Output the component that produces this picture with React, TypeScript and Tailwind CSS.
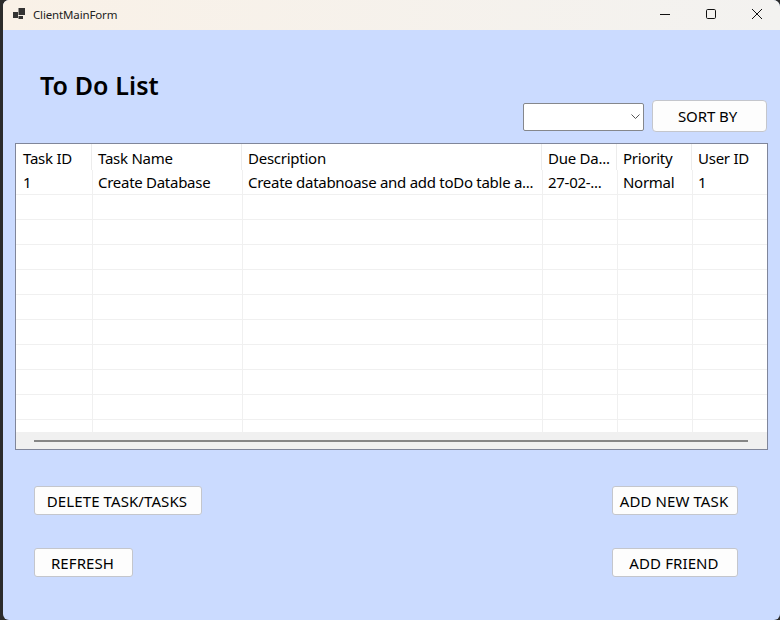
import React from "react";

const Btn = ({ label, w }: { label: string; w: string }) => (
  <button className={`${w} h-[29px] flex items-center justify-center pt-[1px] pr-[2px] rounded-[3px] bg-[#fdfdfd] border border-[#c4c6cc] text-[15px] text-black tracking-[0.1px]`}>
    {label}
  </button>
);

const headers: [string, string][] = [
  ["Task ID", "w-[76px]"],
  ["Task Name", "w-[150px]"],
  ["Description", "w-[300px]"],
  ["Due Da...", "w-[75px]"],
  ["Priority", "w-[75px]"],
  ["User ID", "flex-1"],
];
const widths = ["w-[77px]", "w-[150px]", "w-[300px]", "w-[75px]", "w-[75px]", "flex-1"];
const first = ["1", "Create Database", "Create databnoase and add toDo table a...", "27-02-...", "Normal", "1"];

const Row = ({ cells }: { cells: string[] }) => (
  <div className="flex h-[25px] shrink-0 border-b border-[#f0f0f0]">
    {widths.map((w, i) => (
      <div
        key={i}
        className={`${w} ${i < 5 ? "border-r border-[#f0f0f0]" : ""} ${i === 0 ? "pl-[7px]" : "pl-[5px]"} h-full flex items-center whitespace-nowrap overflow-hidden text-[15px] text-black tracking-[-0.28px]`}
      >
        {cells[i]}
      </div>
    ))}
  </div>
);

export default function App() {
  return (
    <div className="w-[780px] h-[620px] bg-[#2b2b2b] pl-[3px] overflow-hidden" style={{ fontFamily: '"Noto Sans", "Open Sans", sans-serif' }}>
      <div className="w-[777px] h-[620px] rounded-tl-[6px] rounded-tr-[7px] rounded-b-[6px] overflow-hidden bg-[#cbdbff] flex flex-col">
        {/* title bar */}
        <div className="h-[30px] shrink-0 flex items-center bg-gradient-to-r from-[#f9f1e7] to-[#f3f2f0]">
          <svg width="12" height="12" viewBox="0 0 12 12" className="ml-[10px] -mt-[2px]">
            <rect x="0" y="4" width="5" height="6" fill="#333" />
            <rect x="5.5" y="0" width="6.5" height="7" fill="#333" />
            <rect x="5.5" y="8" width="4.5" height="3" fill="#333" />
          </svg>
          <span className="ml-[8px] text-[11.5px] text-[#222] tracking-[-0.15px]">ClientMainForm</span>
          <div className="ml-auto -mt-[2px] flex items-center">
            <svg width="12" height="12" viewBox="0 0 12 12" className="mr-[34px]">
              <path d="M1 6.5H11" stroke="#111" strokeWidth="1" />
            </svg>
            <svg width="12" height="12" viewBox="0 0 12 12" className="mr-[34px]">
              <rect x="1.5" y="1.5" width="9" height="9" rx="1.2" fill="none" stroke="#111" strokeWidth="1" />
            </svg>
            <svg width="12" height="12" viewBox="0 0 12 12" className="mr-[17px]">
              <path d="M1 1L11 11M11 1L1 11" stroke="#111" strokeWidth="1" />
            </svg>
          </div>
        </div>

        <div className="flex-1 pl-[12px] pr-[12px] flex flex-col">
          {/* heading row */}
          <div className="h-[113px] shrink-0 flex justify-between">
            <h1 className="ml-[25px] mt-[38px] h-[36px] flex items-center text-[25px] font-semibold text-black tracking-[0.1px]">To Do List</h1>
            <div className="self-end mb-[11px] mr-[1px] flex items-center gap-[8px]">
              <div className="w-[121px] h-[28px] mt-[2px] bg-white border border-[#85878c] rounded-[2px] flex items-center justify-end pr-[3px]">
                <svg width="9" height="6" viewBox="0 0 9 6">
                  <path d="M0.5 0.5L4.5 4.5L8.5 0.5" fill="none" stroke="#555" strokeWidth="1" />
                </svg>
              </div>
              <button className="w-[115px] h-[32px] flex items-center justify-center pr-[4px] rounded-[4px] bg-[#fdfdfd] border border-[#c4c6cc] text-[15px] text-black tracking-[-0.1px]">
                SORT BY
              </button>
            </div>
          </div>

          {/* table */}
          <div className="h-[307px] shrink-0 border border-[#80869a] bg-white flex flex-col overflow-hidden">
            <div className="flex h-[26px] shrink-0">
              {headers.map(([h, w], i) => (
                <div
                  key={h}
                  className={`${w} ${i < 5 ? "border-r border-[#ececec]" : ""} ${i === 0 ? "pl-[7px]" : "pl-[6px]"} h-full flex items-center whitespace-nowrap overflow-hidden text-[15px] text-black tracking-[-0.25px] pt-[2px]`}
                >
                  {h}
                </div>
              ))}
            </div>
            <div className="h-[262px] shrink-0 overflow-hidden flex flex-col">
              <Row cells={first} />
              {Array.from({ length: 10 }).map((_, i) => (
                <Row key={i} cells={["", "", "", "", "", ""]} />
              ))}
            </div>
            <div className="flex-1 bg-[#f0f0f0] flex items-center pl-[18px] pr-[19px]">
              <div className="w-full h-[2px] bg-[#868686]" />
            </div>
          </div>

          {/* actions */}
          <div className="mt-[36px] pl-[19px] pr-[30px] flex justify-between">
            <Btn label="DELETE TASK/TASKS" w="w-[168px]" />
            <Btn label="ADD NEW TASK" w="w-[126px]" />
          </div>
          <div className="mt-[33px] pl-[19px] pr-[30px] flex justify-between">
            <Btn label="REFRESH" w="w-[99px]" />
            <Btn label="ADD FRIEND" w="w-[126px]" />
          </div>
        </div>
      </div>
    </div>
  );
}
